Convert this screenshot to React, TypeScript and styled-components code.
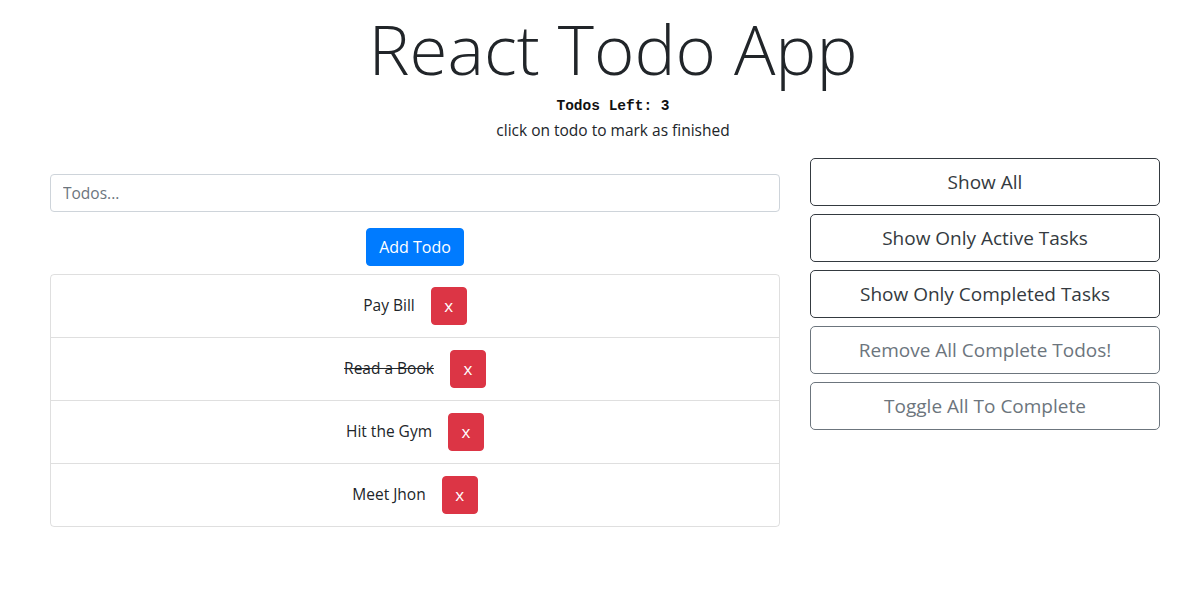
import React, { useState } from 'react';
import styled, { createGlobalStyle } from 'styled-components';

const GlobalStyle = createGlobalStyle`
  body {
    margin: 0;
    background: #fff;
    color: #212529;
    font-family: "Open Sans", "Noto Sans", sans-serif;
    font-size: 16px;
    line-height: 1.5;
  }
  * { box-sizing: border-box; }
`;

interface Todo {
  id: number;
  text: string;
  done: boolean;
}

const initialTodos: Todo[] = [
  { id: 1, text: 'Pay Bill', done: false },
  { id: 2, text: 'Read a Book', done: true },
  { id: 3, text: 'Hit the Gym', done: false },
  { id: 4, text: 'Meet Jhon', done: false },
];

export default function App() {
  const [todos, setTodos] = useState<Todo[]>(initialTodos);
  const [text, setText] = useState('');

  const left = todos.filter((t) => !t.done).length;

  const toggle = (id: number) =>
    setTodos((ts) => ts.map((t) => (t.id === id ? { ...t, done: !t.done } : t)));
  const remove = (id: number) => setTodos((ts) => ts.filter((t) => t.id !== id));
  const add = () => {
    if (!text.trim()) return;
    setTodos((ts) => [...ts, { id: Date.now(), text, done: false }]);
    setText('');
  };

  return (
    <Page>
      <GlobalStyle />
      <Header>
        <Title>React Todo App</Title>
        <Counter>Todos Left: {left}</Counter>
        <Hint>click on todo to mark as finished</Hint>
      </Header>
      <Row>
        <Main>
          <Input
            placeholder="Todos..."
            value={text}
            onChange={(e) => setText(e.target.value)}
          />
          <AddButton onClick={add}>Add Todo</AddButton>
          <List>
            {todos.map((todo) => (
              <Item key={todo.id}>
                <TodoText $done={todo.done} onClick={() => toggle(todo.id)}>
                  {todo.text}
                </TodoText>
                <DeleteButton onClick={() => remove(todo.id)}>x</DeleteButton>
              </Item>
            ))}
          </List>
        </Main>
        <Side>
          <OutlineButton $variant="dark">Show All</OutlineButton>
          <OutlineButton $variant="dark">Show Only Active Tasks</OutlineButton>
          <OutlineButton $variant="dark">Show Only Completed Tasks</OutlineButton>
          <OutlineButton $variant="secondary">Remove All Complete Todos!</OutlineButton>
          <OutlineButton $variant="secondary">Toggle All To Complete</OutlineButton>
        </Side>
      </Row>
    </Page>
  );
}

const Page = styled.div`
  padding: 7px 34px 0 50px;
`;

const Header = styled.header`
  display: flex;
  flex-direction: column;
  align-items: center;
  padding-left: 16px;
`;

const Title = styled.h1`
  margin: 0 0 7px;
  font-size: 69px;
  font-weight: 300;
  line-height: 1.2;
  color: #212529;
`;

const Counter = styled.code`
  font-family: "Liberation Mono", monospace;
  font-size: 14.5px;
  font-weight: 700;
  color: #111;
  line-height: 1.3;
`;

const Hint = styled.p`
  margin: 3px 0 0;
  font-size: 15.5px;
  line-height: 1.5;
`;

const Row = styled.div`
  display: grid;
  grid-template-columns: 730px 350px;
  column-gap: 30px;
  margin-top: 16px;
`;

const Main = styled.div`
  display: flex;
  flex-direction: column;
  align-items: center;
  padding-top: 16px;
`;

const Input = styled.input`
  width: 100%;
  height: 38px;
  padding: 6px 12px;
  font: inherit;
  font-size: 15.5px;
  color: #495057;
  border: 1px solid #ced4da;
  border-radius: 4px;
  outline: none;

  &::placeholder {
    color: #6c757d;
  }
`;

const AddButton = styled.button`
  margin-top: 16px;
  height: 38px;
  padding: 0 12px;
  font: inherit;
  color: #fff;
  background: #007bff;
  border: 1px solid #007bff;
  border-radius: 4px;
  cursor: pointer;
`;

const List = styled.ul`
  width: 100%;
  margin: 8px 0 0;
  padding: 0;
  list-style: none;
  border: 1px solid rgba(0, 0, 0, 0.125);
  border-radius: 4px;
`;

const Item = styled.li`
  display: flex;
  justify-content: center;
  align-items: center;
  gap: 16px;
  padding: 12px 20px;

  & + & {
    border-top: 1px solid rgba(0, 0, 0, 0.125);
  }
`;

const TodoText = styled.span<{ $done: boolean }>`
  cursor: pointer;
  font-size: 15.5px;
  text-decoration: ${(p) => (p.$done ? 'line-through' : 'none')};
`;

const DeleteButton = styled.button`
  min-width: 36px;
  height: 38px;
  padding: 0 12px;
  font: inherit;
  font-size: 17px;
  color: #fff;
  background: #dc3545;
  border: 1px solid #dc3545;
  border-radius: 4px;
  cursor: pointer;
`;

const Side = styled.div`
  display: flex;
  flex-direction: column;
  gap: 8px;
`;

const OutlineButton = styled.button<{ $variant: 'dark' | 'secondary' }>`
  height: 48px;
  padding: 0 16px;
  font: inherit;
  font-size: 19px;
  background: transparent;
  color: ${(p) => (p.$variant === 'dark' ? '#343a40' : '#6c757d')};
  border: 1px solid ${(p) => (p.$variant === 'dark' ? '#343a40' : '#6c757d')};
  border-radius: 5px;
  cursor: pointer;
`;
